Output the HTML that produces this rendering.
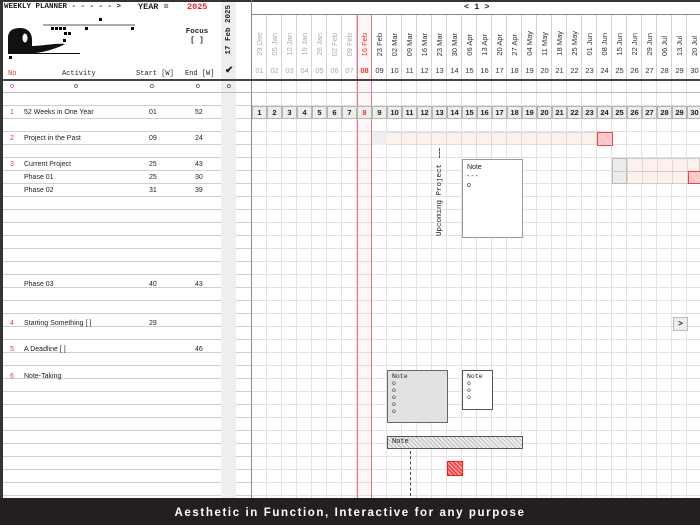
<!DOCTYPE html>
<html><head><meta charset="utf-8"><style>
*{margin:0;padding:0;box-sizing:border-box}
body{width:700px;height:525px;overflow:hidden;background:#fff;font-family:"Liberation Sans",sans-serif;position:relative;color:#222}
.a{position:absolute}
.m{font-family:"Liberation Mono",monospace}
.lp{left:3px;top:80px;width:249px;height:418px;background:repeating-linear-gradient(to bottom,transparent 0,transparent 12px,#cfcfcf 12px,#cfcfcf 13px)}
.wk{left:252px;top:80px;width:448px;height:418px;background:
repeating-linear-gradient(to right,transparent 0,transparent 14px,#e2e2e2 14px,#e2e2e2 15px),
repeating-linear-gradient(to bottom,transparent 0,transparent 12px,#e2e2e2 12px,#e2e2e2 13px)}
.hd{left:252px;top:14px;width:448px;height:65px;background:repeating-linear-gradient(to right,transparent 0,transparent 14px,#d4d4d4 14px,#d4d4d4 15px)}
.dt{position:absolute;bottom:469px;width:15px;font-size:7.5px;writing-mode:vertical-rl;transform:rotate(180deg);white-space:nowrap;line-height:15px;color:#333}
.wn{position:absolute;top:66px;width:15px;text-align:center;font-size:7.5px;color:#333}
.rn{position:absolute;top:106px;width:15px;height:13px;text-align:center;font-size:7.5px;line-height:12px;background:#efede8;border:1px solid #b5b5b5;font-weight:bold}
.g{color:#aaa}.r{color:#e33}
.t{position:absolute;font-size:7px;line-height:13px;white-space:nowrap}
</style></head><body>
<div class="a lp"></div>
<div class="a" style="left:221px;top:0;width:15px;height:498px;background:#eeeeee"></div>
<div class="a wk"></div>
<div class="a hd"></div>
<div class="a" style="left:357px;top:14px;width:15px;height:484px;background:rgba(240,200,200,0.15);border-left:1.5px solid #f07080;border-right:1.5px solid #f07080"></div>
<div class="a" style="left:0;top:0;width:700px;height:2px;background:#333"></div>
<div class="a" style="left:0;top:0;width:3px;height:498px;background:#333"></div>
<div class="a" style="left:251px;top:0;width:1px;height:498px;background:#888"></div>
<div class="a" style="left:252px;top:14px;width:448px;height:1px;background:#888"></div>
<div class="a" style="left:3px;top:79px;width:697px;height:1.5px;background:#444"></div>
<div class="a" style="left:3px;top:92px;width:697px;height:1px;background:#bbb"></div>

<div class="a m" style="left:4px;top:3px;font-size:7.5px;font-weight:bold;white-space:nowrap">WEEKLY PLANNER - - - - - &gt;</div>
<div class="a m" style="left:138px;top:2px;font-size:8.5px;font-weight:bold">YEAR =</div>
<div class="a m" style="left:187px;top:2px;font-size:8.5px;font-weight:bold;color:#e22">2025</div>
<div class="a m" style="left:185px;top:28px;font-size:7.5px;font-weight:bold;text-align:center;width:24px;line-height:9px">Focus<br>[ ]</div>
<svg class="a" style="left:0;top:0" width="140" height="62">
<line x1="43" y1="25" x2="135" y2="25" stroke="#555" stroke-width="1"/>
<rect x="99" y="18" width="3" height="3"/><rect x="51" y="27" width="3" height="3"/><rect x="55" y="27" width="3" height="3"/><rect x="59" y="27" width="3" height="3"/><rect x="63" y="27" width="3" height="3"/><rect x="85" y="27" width="3" height="3"/><rect x="131" y="27" width="3" height="3"/><rect x="64" y="32" width="3" height="3"/><rect x="68" y="32" width="3" height="3"/><rect x="63" y="39" width="3" height="3"/><rect x="9" y="56" width="3" height="3"/>
<path d="M8 53 L8 38 C8 30 14 28 20 28 C28 28 32 33 32 40 L32 46 C42 46 55 43 65 44 C58 48 45 52 36 53 Z" fill="#111"/>
<ellipse cx="25" cy="38" rx="2.5" ry="4.5" fill="#fff"/>
<line x1="8" y1="53.5" x2="80" y2="53.5" stroke="#111" stroke-width="1"/>
</svg>
<div class="a m" style="left:222px;bottom:470px;width:14px;writing-mode:vertical-rl;transform:rotate(180deg);white-space:nowrap;font-size:7.5px;font-weight:bold;line-height:14px">17 Feb 2025</div>
<div class="a" style="left:225px;top:65px;font-size:10px;font-weight:bold">✔</div>
<div class="a m" style="left:8px;top:70px;font-size:7px;color:#e33">No</div>
<div class="a m" style="left:62px;top:70px;font-size:7px">Activity</div>
<div class="a m" style="left:136px;top:70px;font-size:7px;white-space:nowrap">Start [W]</div>
<div class="a m" style="left:185px;top:70px;font-size:7px;white-space:nowrap">End [W]</div>
<div class="t r" style="left:10px;top:80px">o</div><div class="t" style="left:74px;top:80px">o</div><div class="t" style="left:150px;top:80px">o</div><div class="t" style="left:196px;top:80px">o</div><div class="t" style="left:227px;top:80px">o</div>
<div class="a m" style="left:464px;top:2px;font-size:8.5px;font-weight:bold;white-space:nowrap">&lt; 1 &gt;</div>

<div class="t r" style="left:10px;top:106px">1</div><div class="t" style="left:24px;top:106px">52 Weeks in One Year</div><div class="t" style="left:149px;top:106px">01</div><div class="t" style="left:195px;top:106px">52</div>
<div class="t r" style="left:10px;top:132px">2</div><div class="t" style="left:24px;top:132px">Project in the Past</div><div class="t" style="left:149px;top:132px">09</div><div class="t" style="left:195px;top:132px">24</div>
<div class="t r" style="left:10px;top:158px">3</div><div class="t" style="left:24px;top:158px">Current Project</div><div class="t" style="left:149px;top:158px">25</div><div class="t" style="left:195px;top:158px">43</div>
<div class="t" style="left:24px;top:171px">Phase 01</div><div class="t" style="left:149px;top:171px">25</div><div class="t" style="left:195px;top:171px">30</div>
<div class="t" style="left:24px;top:184px">Phase 02</div><div class="t" style="left:149px;top:184px">31</div><div class="t" style="left:195px;top:184px">39</div>
<div class="t" style="left:24px;top:278px">Phase 03</div><div class="t" style="left:149px;top:278px">40</div><div class="t" style="left:195px;top:278px">43</div>
<div class="t r" style="left:10px;top:317px">4</div><div class="t" style="left:24px;top:317px">Starting Something [ ]</div><div class="t" style="left:149px;top:317px">29</div>
<div class="t r" style="left:10px;top:343px">5</div><div class="t" style="left:24px;top:343px">A Deadline [ ]</div><div class="t" style="left:195px;top:343px">46</div>
<div class="t r" style="left:10px;top:370px">6</div><div class="t" style="left:24px;top:370px">Note-Taking</div>

<div class="dt g" style="left:252px">29 Dec</div><div class="dt g" style="left:267px">05 Jan</div><div class="dt g" style="left:282px">12 Jan</div><div class="dt g" style="left:297px">19 Jan</div><div class="dt g" style="left:312px">26 Jan</div><div class="dt g" style="left:327px">02 Feb</div><div class="dt g" style="left:342px">09 Feb</div><div class="dt r" style="left:357px">16 Feb</div><div class="dt" style="left:372px">23 Feb</div><div class="dt" style="left:387px">02 Mar</div><div class="dt" style="left:402px">09 Mar</div><div class="dt" style="left:417px">16 Mar</div><div class="dt" style="left:432px">23 Mar</div><div class="dt" style="left:447px">30 Mar</div><div class="dt" style="left:462px">06 Apr</div><div class="dt" style="left:477px">13 Apr</div><div class="dt" style="left:492px">20 Apr</div><div class="dt" style="left:507px">27 Apr</div><div class="dt" style="left:522px">04 May</div><div class="dt" style="left:537px">11 May</div><div class="dt" style="left:552px">18 May</div><div class="dt" style="left:567px">25 May</div><div class="dt" style="left:582px">01 Jun</div><div class="dt" style="left:597px">08 Jun</div><div class="dt" style="left:612px">15 Jun</div><div class="dt" style="left:627px">22 Jun</div><div class="dt" style="left:642px">29 Jun</div><div class="dt" style="left:657px">06 Jul</div><div class="dt" style="left:672px">13 Jul</div><div class="dt" style="left:687px">20 Jul</div>

<div class="wn g" style="left:252px">01</div><div class="wn g" style="left:267px">02</div><div class="wn g" style="left:282px">03</div><div class="wn g" style="left:297px">04</div><div class="wn g" style="left:312px">05</div><div class="wn g" style="left:327px">06</div><div class="wn g" style="left:342px">07</div><div class="wn r" style="left:357px;font-weight:bold">08</div><div class="wn" style="left:372px">09</div><div class="wn" style="left:387px">10</div><div class="wn" style="left:402px">11</div><div class="wn" style="left:417px">12</div><div class="wn" style="left:432px">13</div><div class="wn" style="left:447px">14</div><div class="wn" style="left:462px">15</div><div class="wn" style="left:477px">16</div><div class="wn" style="left:492px">17</div><div class="wn" style="left:507px">18</div><div class="wn" style="left:522px">19</div><div class="wn" style="left:537px">20</div><div class="wn" style="left:552px">21</div><div class="wn" style="left:567px">22</div><div class="wn" style="left:582px">23</div><div class="wn" style="left:597px">24</div><div class="wn" style="left:612px">25</div><div class="wn" style="left:627px">26</div><div class="wn" style="left:642px">27</div><div class="wn" style="left:657px">28</div><div class="wn" style="left:672px">29</div><div class="wn" style="left:687px">30</div>

<div class="rn" style="left:252px">1</div><div class="rn" style="left:267px">2</div><div class="rn" style="left:282px">3</div><div class="rn" style="left:297px">4</div><div class="rn" style="left:312px">5</div><div class="rn" style="left:327px">6</div><div class="rn" style="left:342px">7</div><div class="rn r" style="left:357px">8</div><div class="rn" style="left:372px">9</div><div class="rn" style="left:387px">10</div><div class="rn" style="left:402px">11</div><div class="rn" style="left:417px">12</div><div class="rn" style="left:432px">13</div><div class="rn" style="left:447px">14</div><div class="rn" style="left:462px">15</div><div class="rn" style="left:477px">16</div><div class="rn" style="left:492px">17</div><div class="rn" style="left:507px">18</div><div class="rn" style="left:522px">19</div><div class="rn" style="left:537px">20</div><div class="rn" style="left:552px">21</div><div class="rn" style="left:567px">22</div><div class="rn" style="left:582px">23</div><div class="rn" style="left:597px">24</div><div class="rn" style="left:612px">25</div><div class="rn" style="left:627px">26</div><div class="rn" style="left:642px">27</div><div class="rn" style="left:657px">28</div><div class="rn" style="left:672px">29</div><div class="rn" style="left:687px">30</div>

<div class="a" style="left:372px;top:132px;width:225px;height:13px;background:repeating-linear-gradient(to right,#fdf1ee 0,#fdf1ee 14px,#e4d8d6 14px,#e4d8d6 15px);border-top:1px solid #ddd;border-bottom:1px solid #ddd"></div>
<div class="a" style="left:372px;top:132px;width:15px;height:13px;background:#eee"></div>
<div class="a" style="left:597px;top:132px;width:16px;height:14px;background:repeating-linear-gradient(45deg,#f6b0b0 0,#f6b0b0 1px,#fde4e4 1px,#fde4e4 2px);border:1px solid #e44"></div>
<div class="a" style="left:612px;top:158px;width:88px;height:26px;background:repeating-linear-gradient(to right,#fdf1ee 0,#fdf1ee 14px,#e4d8d6 14px,#e4d8d6 15px);border:1px solid #ccc"></div>
<div class="a" style="left:612px;top:158px;width:15px;height:26px;background:#ececec;border:1px solid #bbb"></div>
<div class="a" style="left:612px;top:171px;width:88px;height:1px;background:#ccc"></div>
<div class="a" style="left:688px;top:171px;width:14px;height:13px;background:repeating-linear-gradient(45deg,#f6b0b0 0,#f6b0b0 1px,#fde4e4 1px,#fde4e4 2px);border:1px solid #e44"></div>
<div class="a" style="left:439px;top:148px;height:10px;border-left:1px dashed #555"></div>
<div class="a m" style="left:434px;bottom:289px;width:12px;writing-mode:vertical-rl;transform:rotate(180deg);white-space:nowrap;font-size:7.5px;line-height:12px">Upcoming Project</div>
<div class="a" style="left:462px;top:159px;width:61px;height:79px;background:#fff;border:1px solid #999;font-size:7px;padding:3px 4px;line-height:9px">Note<br>- - -<br>o</div>
<div class="a" style="left:673px;top:317px;width:15px;height:14px;background:#eee;border:1px solid #bbb;font-size:8px;text-align:center;line-height:12px;font-weight:bold">&gt;</div>
<div class="a m" style="left:387px;top:370px;width:61px;height:53px;background:#e2e2e2;border:1px solid #666;font-size:6.5px;padding:2px 4px;line-height:7px">Note<br>o<br>o<br>o<br>o<br>o</div>
<div class="a m" style="left:462px;top:370px;width:31px;height:40px;background:#fff;border:1px solid #555;font-size:6.5px;padding:2px 4px;line-height:7px">Note<br>o<br>o<br>o</div>
<div class="a m" style="left:387px;top:436px;width:136px;height:13px;background:repeating-linear-gradient(45deg,#bbb 0,#bbb 1px,#eee 1px,#eee 3px);border:1px solid #555;font-size:7px;padding-left:4px;line-height:11px">Note</div>
<div class="a" style="left:410px;top:451px;height:45px;border-left:1px dashed #444"></div>
<div class="a" style="left:447px;top:461px;width:16px;height:15px;background:repeating-linear-gradient(45deg,#f44 0,#f44 2px,#fcc 2px,#fcc 3px);border:1px solid #e22"></div>

<div class="a" style="left:0;top:498px;width:700px;height:27px;background:#231f20;color:#fff;font-size:11.5px;font-weight:bold;letter-spacing:1.6px;text-align:center;line-height:30px">Aesthetic in Function, Interactive for any purpose</div>
</body></html>
